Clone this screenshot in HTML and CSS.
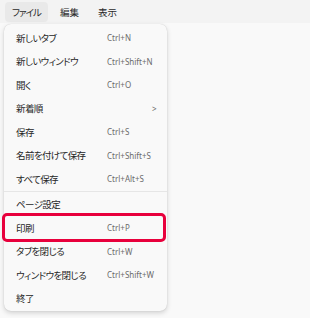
FILE: index.html
```html
<!DOCTYPE html>
<html lang="ja">
<head>
  <meta charset="UTF-8">
  <link rel="stylesheet" href="styles.css">
  <title>メニュー</title>
</head>
<body>
  <!-- Menu Bar -->
  <div class="menubar">
    <span class="tab active">ファイル</span>
    <span class="tab">編集</span>
    <span class="tab">表示</span>
  </div>

  <!-- File Menu -->
  <div class="menu">
    <div class="item"><span class="label">新しいタブ</span><span class="key">Ctrl+N</span></div>
    <div class="item"><span class="label">新しいウィンドウ</span><span class="key">Ctrl+Shift+N</span></div>
    <div class="item"><span class="label">開く</span><span class="key">Ctrl+O</span></div>
    <div class="item"><span class="label">新着順</span><span class="arrow">&gt;</span></div>
    <div class="item"><span class="label">保存</span><span class="key">Ctrl+S</span></div>
    <div class="item"><span class="label">名前を付けて保存</span><span class="key">Ctrl+Shift+S</span></div>
    <div class="item"><span class="label">すべて保存</span><span class="key">Ctrl+Alt+S</span></div>
    <div class="sep"></div>
    <div class="item"><span class="label">ページ設定</span></div>
    <div class="item marked"><span class="label">印刷</span><span class="key">Ctrl+P</span></div>
    <div class="item"><span class="label">タブを閉じる</span><span class="key">Ctrl+W</span></div>
    <div class="item"><span class="label">ウィンドウを閉じる</span><span class="key">Ctrl+Shift+W</span></div>
    <div class="item"><span class="label">終了</span></div>
  </div>
</body>
</html>
```

FILE: styles.css
```css
/* General */
body {
  margin: 0;
  background: #f9f9f9;
  font-family: "Noto Sans CJK JP", "Noto Sans", sans-serif;
  font-feature-settings: "palt";
  color: #1b1b1b;
}

/* Menu Bar */
.menubar {
  height: 23px;
  background: #f3f3f3;
  display: flex;
  align-items: center;
  padding-left: 5px;
}

.tab {
  font-size: 9.5px;
  line-height: 20px;
  padding: 0 7px;
  margin-right: 5px;
  border-radius: 4px;
  color: #2a2a2a;
}

.tab.active {
  background: #e9e9e9;
  letter-spacing: -1px;
}

/* Menu Panel */
.menu {
  position: absolute;
  top: 24px;
  left: 4px;
  width: 163px;
  padding: 2px 0 1px;
  background: #f9f9f9;
  border-radius: 7px;
  box-shadow: 0 2px 5px rgba(0, 0, 0, 0.16), 0 0 1px rgba(0, 0, 0, 0.2);
}

.item {
  position: relative;
  height: 23.5px;
  display: flex;
  align-items: center;
  padding-left: 12px;
}

.label {
  width: 91px;
  font-size: 9.5px;
  letter-spacing: -0.6px;
  color: #262626;
}

.key {
  font-family: "Noto Sans", sans-serif;
  font-size: 8px;
  color: #6b6b6b;
}

.arrow {
  margin-left: 45px;
  font-family: "Noto Sans", sans-serif;
  font-size: 8px;
  color: #6a6a6a;
}

.sep {
  height: 1px;
  background: #e6e6e6;
  margin: 0 0 1px;
}

.marked::after {
  content: "";
  position: absolute;
  top: -3px;
  left: -2px;
  right: 1px;
  bottom: -2px;
  border: 3px solid #e8003c;
  border-radius: 5px;
}
```
